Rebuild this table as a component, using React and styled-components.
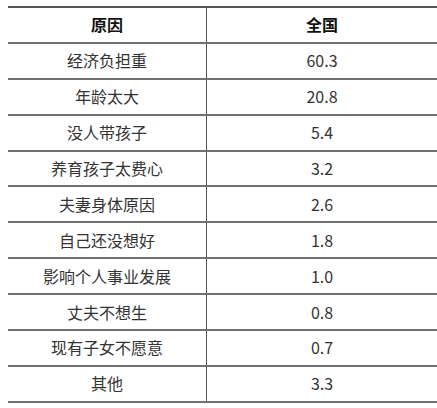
import React from "react";
import styled, { createGlobalStyle } from "styled-components";

const Global = createGlobalStyle`
  html, body { margin: 0; padding: 0; background: #fff; }
  body { font-family: "Noto Sans CJK SC", "Noto Sans", sans-serif; }
`;

const Table = styled.div`
  margin: 6px 0 0 8px;
  width: 429px;
  border-bottom: 2px solid #707070;
`;

const Row = styled.div`
  display: grid;
  grid-template-columns: 199px 1fr;
  height: 35.9px;
  box-sizing: border-box;
  border-top: 2px solid ${(p) => (p.$header ? "#555" : "#707070")};
`;

const Cell = styled.div`
  display: flex;
  align-items: center;
  justify-content: center;
  font-size: 16px;
  line-height: 1;
  color: ${(p) => (p.$header ? "#111" : "#333")};
  font-weight: ${(p) => (p.$header ? 700 : 400)};
  border-right: ${(p) => (p.$left ? "1.5px solid #555" : "none")};
  padding-bottom: 1px;
`;

const rows = [
  ["经济负担重", "60.3"],
  ["年龄太大", "20.8"],
  ["没人带孩子", "5.4"],
  ["养育孩子太费心", "3.2"],
  ["夫妻身体原因", "2.6"],
  ["自己还没想好", "1.8"],
  ["影响个人事业发展", "1.0"],
  ["丈夫不想生", "0.8"],
  ["现有子女不愿意", "0.7"],
  ["其他", "3.3"],
];

export default function App() {
  return (
    <>
      <Global />
      <Table>
        <Row $header>
          <Cell $header $left>原因</Cell>
          <Cell $header>全国</Cell>
        </Row>
        {rows.map(([a, b]) => (
          <Row key={a}>
            <Cell $left>{a}</Cell>
            <Cell>{b}</Cell>
          </Row>
        ))}
      </Table>
    </>
  );
}
